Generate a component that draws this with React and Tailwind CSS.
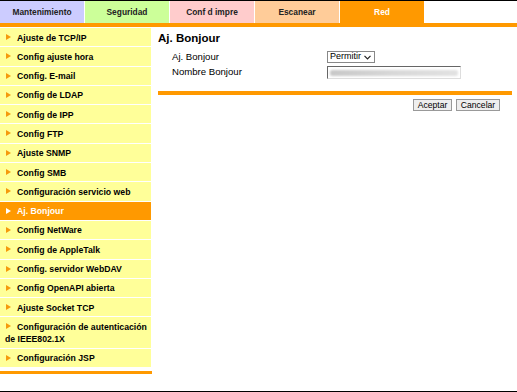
import React from "react";

const tabs = [
  { label: "Mantenimiento", bg: "bg-[#ccccff]", text: "text-[#222]" },
  { label: "Seguridad", bg: "bg-[#ccff99]", text: "text-[#222]" },
  { label: "Conf d impre", bg: "bg-[#ffcccc]", text: "text-[#222]" },
  { label: "Escanear", bg: "bg-[#ffcc99]", text: "text-[#222]" },
  { label: "Red", bg: "bg-[#ff9900]", text: "text-white" },
];

const menu = [
  "Ajuste de TCP/IP",
  "Config ajuste hora",
  "Config. E-mail",
  "Config de LDAP",
  "Config de IPP",
  "Config FTP",
  "Ajuste SNMP",
  "Config SMB",
  "Configuración servicio web",
  "Aj. Bonjour",
  "Config NetWare",
  "Config de AppleTalk",
  "Config. servidor WebDAV",
  "Config OpenAPI abierta",
  "Ajuste Socket TCP",
  "Configuración de autenticación de IEEE802.1X",
  "Configuración JSP",
];

const Arrow = ({ active }) => (
  <span
    className={`inline-block w-0 h-0 mr-[6px] ml-px align-[0.5px] border-y-[3.5px] border-y-transparent border-l-[5px] ${
      active ? "border-l-white" : "border-l-[#f59a0c]"
    }`}
  />
);

export default function App() {
  return (
    <div className="w-[517px] h-[392px] bg-white border-y border-black flex flex-col font-['Liberation_Sans',Arial,sans-serif] overflow-hidden">
      {/* top tabs */}
      <div className="flex h-[22px]">
        {tabs.map((t) => (
          <div
            key={t.label}
            className={`w-[85px] border-r border-white flex items-center justify-center text-[8.4px] font-bold ${t.bg} ${t.text}`}
          >
            {t.label}
          </div>
        ))}
      </div>
      <div className="h-[4px] bg-[#ff9900]" />

      <div className="flex mt-px">
        {/* side menu */}
        <div className="w-[152px] flex flex-col">
          <div className="w-[151px] flex flex-col gap-px">
            {menu.map((m) => {
              const active = m === "Aj. Bonjour";
              return (
                <div
                  key={m}
                  className={`pl-[5px] pr-px pt-[3.5px] pb-[2.8px] leading-[12px] text-[8.7px] font-bold ${
                    active ? "bg-[#ff9900] text-white" : "bg-[#ffff99] text-black"
                  }`}
                >
                  <Arrow active={active} />
                  {m}
                </div>
              );
            })}
          </div>
          <div className="mt-[4px] h-[3px] bg-[#ff9900]" />
        </div>

        {/* main panel */}
        <div className="ml-[6px] w-[354px] pt-[3px]">
          <h1 className="text-[11.5px] leading-[14px] font-bold text-black">Aj. Bonjour</h1>

          <div className="mt-[6px] pl-[14px] flex flex-col gap-[3px] text-[9.6px] text-black">
            <div className="flex items-center h-[12px]">
              <span className="w-[155px]">Aj. Bonjour</span>
              <div className="h-[12px] w-[48px] border border-[#888] bg-white flex items-center justify-between pl-[2px] pr-[3px] text-[9px]">
                <span>Permitir</span>
                <svg width="7" height="5" viewBox="0 0 7 5">
                  <path d="M0.5 0.8 L3.5 3.8 L6.5 0.8" fill="none" stroke="#222" strokeWidth="1.2" />
                </svg>
              </div>
            </div>
            <div className="flex items-center h-[13px]">
              <span className="w-[155px]">Nombre Bonjour</span>
              <div className="h-[13px] w-[134px] border-t border-l border-[#666] border-r border-b border-r-[#ddd] border-b-[#ddd] bg-white flex items-center px-[2px]">
                <div className="h-[6px] w-full rounded-[2px] bg-gradient-to-r from-[#c8c8c8] via-[#d8d8d8] to-[#e2e2e2] blur-[0.8px]" />
              </div>
            </div>
          </div>

          <div className="mt-[12px] h-[4px] bg-[#ff9900]" />

          <div className="mt-[4px] pr-[12px] flex justify-end gap-[4px]">
            <button className="h-[12px] w-[39px] border border-[#999] bg-[#eeeeee] text-[8.6px] leading-[10px] text-black">
              Aceptar
            </button>
            <button className="h-[12px] w-[44px] border border-[#999] bg-[#eeeeee] text-[8.6px] leading-[10px] text-black">
              Cancelar
            </button>
          </div>
        </div>
      </div>
    </div>
  );
}
